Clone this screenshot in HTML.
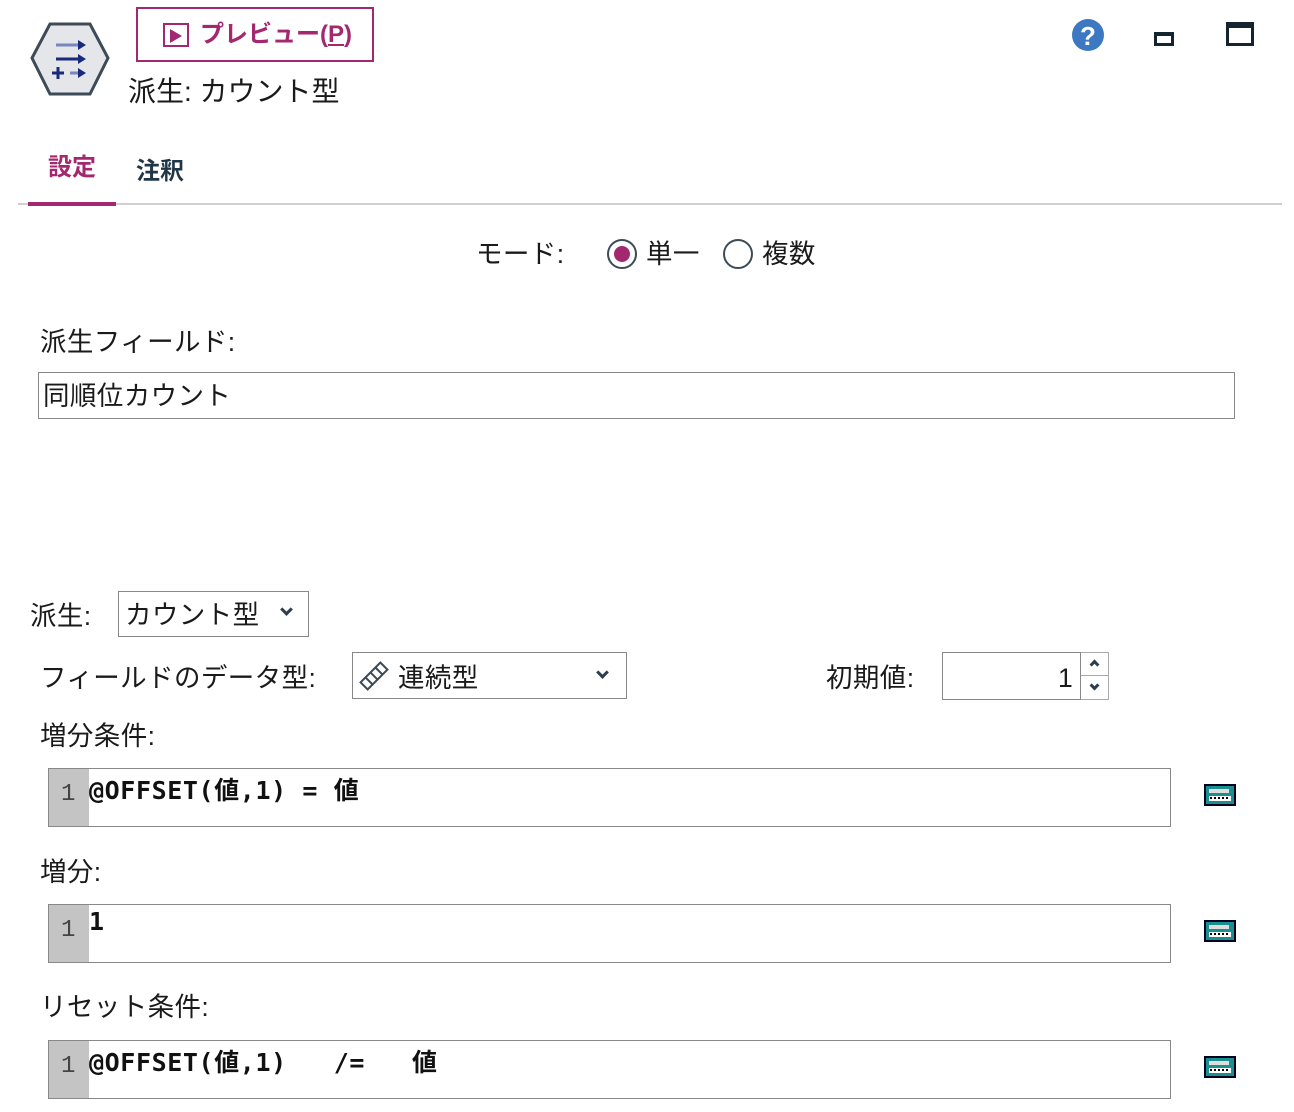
<!DOCTYPE html>
<html><head><meta charset="utf-8"><style>
*{box-sizing:border-box;margin:0;padding:0}
body{width:1294px;height:1112px;background:#fff;position:relative;overflow:hidden;font-family:"Liberation Sans","Noto Sans CJK JP",sans-serif;color:#1a1a1a}
.a{position:absolute;white-space:nowrap}
.t{font-size:26.5px;line-height:30px;letter-spacing:0.4px}
.box{position:absolute;border:1px solid #888;background:#fff}
.ed{position:absolute;border:1px solid #888;background:#fff;left:48px;width:1123px;height:59px}
.ed .g{position:absolute;left:0;top:0;width:40px;height:57px;background:#c4c4c4;font-size:24px;color:#444;padding:12px 0 0 12px;font-family:"Liberation Mono",monospace}
.ed .c{position:absolute;left:40px;top:2px;font-size:25px;font-weight:bold;letter-spacing:0.6px;font-family:"DejaVu Sans Mono","Noto Sans CJK JP",monospace;color:#111;white-space:pre}
.calc{position:absolute;left:1204px;width:32px;height:22px}
.chev{position:absolute;width:9px;height:9px;border-right:3px solid #2c3e50;border-bottom:3px solid #2c3e50;transform:rotate(45deg)}
</style></head><body>
<svg class="a" style="left:28px;top:20px" width="84" height="80" viewBox="0 0 84 80">
<polygon points="22,4 62,4 80,38 62,74 22,74 4,38" fill="#e4e6ea" stroke="#3c4b57" stroke-width="3"/>
<g stroke="#1a2a7a" stroke-width="3" fill="#1a2a7a">
<line x1="28" y1="25" x2="52" y2="25" stroke="#7a86c0"/><polygon points="50,20 58,25 50,30" fill="#1a2a7a" stroke="none"/>
<line x1="28" y1="39" x2="52" y2="39"/><polygon points="50,34 58,39 50,44" stroke="none"/>
<line x1="42" y1="53" x2="52" y2="53" stroke="#7a86c0"/><polygon points="50,48 58,53 50,58" stroke="none"/>
<line x1="24" y1="53" x2="36" y2="53"/><line x1="30" y1="47" x2="30" y2="59"/>
</g></svg>
<div class="a" style="left:136px;top:7px;width:238px;height:55px;border:2px solid #a3286f"></div>
<div class="a" style="left:163px;top:23px;width:26px;height:24px;border:2px solid #a3286f"></div>
<svg class="a" style="left:170px;top:29px" width="12" height="14"><polygon points="0,0 12,7 0,14" fill="#a3286f"/></svg>
<div class="a" style="left:200px;top:20px;font-size:24px;font-weight:bold;color:#a3286f;line-height:30px">プレビュー(<u>P</u>)</div>
<div class="a" style="left:128px;top:76px;font-size:28px;line-height:32px">派生: カウント型</div>
<svg class="a" style="left:1071px;top:18px" width="34" height="34"><circle cx="17" cy="17" r="16" fill="#3d78c3"/><text x="17" y="27" text-anchor="middle" font-family="Liberation Sans" font-weight="bold" font-size="26" fill="#fff">?</text></svg>
<div class="a" style="left:1154px;top:32px;width:20px;height:14px;border:3px solid #15252f;border-top-width:4px"></div>
<div class="a" style="left:1226px;top:22px;width:28px;height:24px;border:3px solid #15252f;border-top-width:6px"></div>
<div class="a" style="left:48px;top:153px;font-size:24px;font-weight:bold;color:#a3286f;line-height:30px">設定</div>
<div class="a" style="left:136px;top:157px;font-size:24px;font-weight:bold;color:#1f3646;line-height:30px">注釈</div>
<div class="a" style="left:18px;top:203px;width:1264px;height:2px;background:#d0d0d0"></div>
<div class="a" style="left:28px;top:202px;width:88px;height:4px;background:#a3286f"></div>
<div class="a t" style="left:476px;top:239px">モード:</div>
<svg class="a" style="left:606px;top:238px" width="32" height="32"><circle cx="16" cy="16" r="14" fill="#fff" stroke="#3c4b57" stroke-width="2"/><circle cx="16" cy="16" r="8" fill="#a3286f"/></svg>
<div class="a t" style="left:646px;top:239px">単一</div>
<svg class="a" style="left:722px;top:238px" width="32" height="32"><circle cx="16" cy="16" r="14" fill="#fff" stroke="#3c4b57" stroke-width="2"/></svg>
<div class="a t" style="left:762px;top:239px">複数</div>
<div class="a t" style="left:40px;top:327px">派生フィールド:</div>
<div class="box" style="left:38px;top:372px;width:1197px;height:47px"></div>
<div class="a t" style="left:43px;top:381px">同順位カウント</div>
<div class="a t" style="left:30px;top:601px">派生:</div>
<div class="box" style="left:118px;top:591px;width:191px;height:46px"></div>
<div class="a t" style="left:125px;top:600px">カウント型</div>
<div class="chev" style="left:282px;top:605px"></div>
<div class="a t" style="left:40px;top:663px">フィールドのデータ型:</div>
<div class="box" style="left:352px;top:652px;width:275px;height:47px"></div>
<svg class="a" style="left:358px;top:660px" width="32" height="32"><g transform="rotate(-45 16 16)" fill="none" stroke="#3c4b57" stroke-width="2"><rect x="2" y="11" width="28" height="10"/><line x1="9" y1="11" x2="9" y2="21"/><line x1="16" y1="11" x2="16" y2="21"/><line x1="23" y1="11" x2="23" y2="21"/></g></svg>
<div class="a t" style="left:398px;top:663px">連続型</div>
<div class="chev" style="left:598px;top:668px"></div>
<div class="a t" style="left:826px;top:663px">初期値:</div>
<div class="box" style="left:942px;top:652px;width:139px;height:48px"></div>
<div class="a t" style="left:1058px;top:663px">1</div>
<div class="a" style="left:1081px;top:652px;width:28px;height:48px;border:1px solid #aaa;border-left:none"></div>
<div class="a" style="left:1081px;top:675px;width:28px;height:1px;background:#aaa"></div>
<div class="chev" style="left:1091px;top:661px;transform:rotate(225deg);width:7px;height:7px"></div>
<div class="chev" style="left:1091px;top:682px;width:7px;height:7px"></div>
<div class="a t" style="left:40px;top:721px">増分条件:</div>
<div class="ed" style="top:768px"><div class="g">1</div><div class="c">@OFFSET(値,1) = 値</div></div>
<div class="a t" style="left:40px;top:857px">増分:</div>
<div class="ed" style="top:904px"><div class="g">1</div><div class="c">1</div></div>
<div class="a t" style="left:40px;top:992px">リセット条件:</div>
<div class="ed" style="top:1040px"><div class="g">1</div><div class="c">@OFFSET(値,1)   /=   値</div></div>
<svg class="calc" style="top:784px" viewBox="0 0 32 22"><rect x="1" y="1" width="30" height="20" fill="#1a8f8f" stroke="#002" stroke-width="2"/><rect x="5" y="5" width="20" height="4" fill="#ddd"/><rect x="5" y="12" width="22" height="5" fill="#fff"/><path d="M6 14h2M10 14h2M14 14h2M18 14h2M22 14h2" stroke="#000" stroke-width="2"/></svg>
<svg class="calc" style="top:920px" viewBox="0 0 32 22"><rect x="1" y="1" width="30" height="20" fill="#1a8f8f" stroke="#002" stroke-width="2"/><rect x="5" y="5" width="20" height="4" fill="#ddd"/><rect x="5" y="12" width="22" height="5" fill="#fff"/><path d="M6 14h2M10 14h2M14 14h2M18 14h2M22 14h2" stroke="#000" stroke-width="2"/></svg>
<svg class="calc" style="top:1056px" viewBox="0 0 32 22"><rect x="1" y="1" width="30" height="20" fill="#1a8f8f" stroke="#002" stroke-width="2"/><rect x="5" y="5" width="20" height="4" fill="#ddd"/><rect x="5" y="12" width="22" height="5" fill="#fff"/><path d="M6 14h2M10 14h2M14 14h2M18 14h2M22 14h2" stroke="#000" stroke-width="2"/></svg>
</body></html>
